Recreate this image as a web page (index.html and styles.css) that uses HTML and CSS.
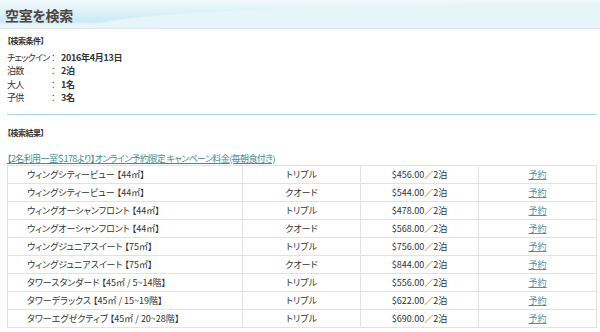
FILE: index.html
```html
<!DOCTYPE html>
<html lang="ja">
<head>
  <meta charset="UTF-8" />
  <meta name="viewport" content="width=device-width, initial-scale=1.0" />
  <title>空室を検索</title>
  <link rel="stylesheet" href="styles.css">
</head>
<body>
  <div class="head">
    <h1>空室を検索</h1>
  </div>

  <div class="content">
    <h3 class="label">【検索条件】</h3>
    <div class="cond">
      <span>チェックイン</span><span>：</span><b>2016年4月13日</b>
      <span>泊数</span><span>：</span><b>2泊</b>
      <span>大人</span><span>：</span><b>1名</b>
      <span>子供</span><span>：</span><b>3名</b>
    </div>

    <hr class="line" />

    <h3 class="label result-label">【検索結果】</h3>
    <a class="plan" href="#">【2名利用一室＄178より】オンライン予約限定 キャンペーン料金(毎朝食付き)</a>

    <table class="rooms">
      <tr><td class="name">ウィングシティービュー 【44㎡】</td><td>トリプル</td><td>$456.00／2泊</td><td><a href="#">予約</a></td></tr>
      <tr><td class="name">ウィングシティービュー 【44㎡】</td><td>クオード</td><td>$544.00／2泊</td><td><a href="#">予約</a></td></tr>
      <tr><td class="name">ウィングオーシャンフロント 【44㎡】</td><td>トリプル</td><td>$478.00／2泊</td><td><a href="#">予約</a></td></tr>
      <tr><td class="name">ウィングオーシャンフロント 【44㎡】</td><td>クオード</td><td>$568.00／2泊</td><td><a href="#">予約</a></td></tr>
      <tr><td class="name">ウィングジュニアスイート 【75㎡】</td><td>トリプル</td><td>$756.00／2泊</td><td><a href="#">予約</a></td></tr>
      <tr><td class="name">ウィングジュニアスイート 【75㎡】</td><td>クオード</td><td>$844.00／2泊</td><td><a href="#">予約</a></td></tr>
      <tr><td class="name">タワースタンダード 【45㎡ / 5~14階】</td><td>トリプル</td><td>$556.00／2泊</td><td><a href="#">予約</a></td></tr>
      <tr><td class="name">タワーデラックス 【45㎡ / 15~19階】</td><td>トリプル</td><td>$622.00／2泊</td><td><a href="#">予約</a></td></tr>
      <tr><td class="name">タワーエグゼクティブ 【45㎡ / 20~28階】</td><td>トリプル</td><td>$690.00／2泊</td><td><a href="#">予約</a></td></tr>
    </table>
  </div>
</body>
</html>
```

FILE: styles.css
```css
body {
  margin: 0;
  background: #fff;
  color: #333;
  font-family: "Noto Sans CJK JP", sans-serif;
  font-size: 9px;
  line-height: 12px;
  font-feature-settings: "palt";
}
.head {
  height: 28px;
  border-bottom: 1px solid #e4e8ea;
  background:
    radial-gradient(ellipse 520px 25px at 100% 100%, #e6f5fa 97%, rgba(230,245,250,0) 100%),
    linear-gradient(180deg, #f0f9fc 0%, #dcf1f8 45%, #c8eaf4 78%, #e4f4f9 86%, #eaf6fa 100%);
}
.head h1 {
  margin: 0;
  padding: 6px 0 0 5px;
  font-size: 14px;
  line-height: 18px;
  font-weight: bold;
  color: #4e443a;
  letter-spacing: -0.3px;
}
.content {
  padding: 0 3px 0 7px;
}
.label {
  margin: 0;
  padding-top: 6px;
  font-size: 8px;
  line-height: 12px;
  font-weight: bold;
  letter-spacing: -0.5px;
}
.cond {
  display: grid;
  grid-template-columns: 44px 10px auto;
  margin-top: 4px;
  line-height: 13.4px;
  white-space: nowrap;
}
.cond span:nth-child(3n+1) {
  letter-spacing: -0.7px;
}
.cond b {
  font-weight: bold;
  letter-spacing: -0.3px;
}
.line {
  margin: 9px 0 0 0;
  border: 0;
  border-top: 1px solid #a9d9e3;
}
.result-label {
  padding-top: 12px;
}
.plan {
  display: block;
  margin-top: 14px;
  line-height: 12px;
  color: #3f8f96;
  text-decoration: underline;
  letter-spacing: -0.6px;
}
.rooms {
  width: 100%;
  border-collapse: collapse;
  margin-top: 0;
}
.rooms td {
  height: 17px;
  line-height: 17px;
  padding: 0;
  border: 1px solid #e2e2e2;
  text-align: center;
  width: 117px;
}
.rooms td.name {
  text-align: left;
  padding-left: 19px;
  width: auto;
}
.rooms a {
  color: #4b93a0;
}
```
